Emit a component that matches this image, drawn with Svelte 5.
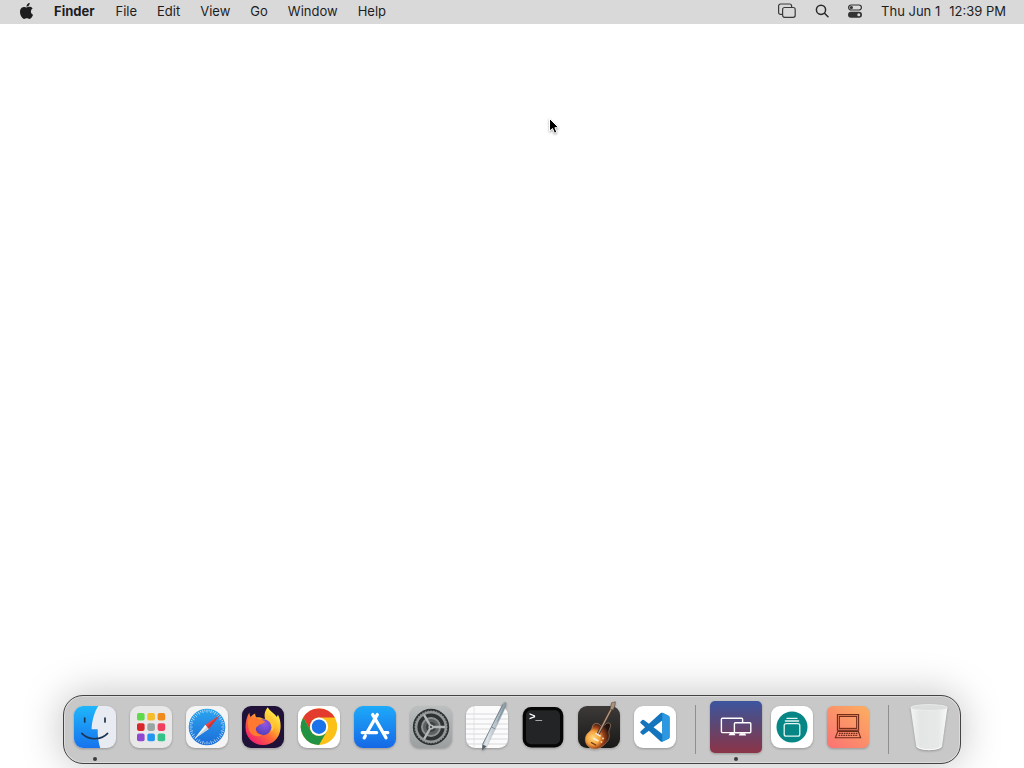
<script>
  const menus = ["File", "Edit", "View", "Go", "Window", "Help"];

  const padColors = [
    ["#5fd94b", "#f4bd2c", "#ef8a1f"],
    ["#d8262b", "#9aa5a3", "#f0405f"],
    ["#8f48cf", "#2196f3", "#33c288"],
  ];

  const ticks = Array.from({ length: 48 }, (_, i) => i * 7.5);
  const teeth = Array.from({ length: 36 }, (_, i) => i * 10);
  const paperLines = [13, 18, 23, 28, 33, 38, 43];
</script>

{#snippet finder()}
  <defs>
    <linearGradient id="finder-blue" x1="0" y1="0" x2="0" y2="1">
      <stop offset="0" stop-color="#1fb6fb" />
      <stop offset="1" stop-color="#1673ee" />
    </linearGradient>
    <clipPath id="finder-clip"><rect x="5" y="5" width="42" height="42" rx="9" /></clipPath>
  </defs>
  <g clip-path="url(#finder-clip)">
    <rect x="5" y="5" width="42" height="42" fill="#e9ebf2" />
    <path d="M5 5H29.3C25.5 11 23 19 22.6 28.3H28.7C28.6 35 29.4 42 31.2 47H5z" fill="url(#finder-blue)" />
  </g>
  <path d="M15.7 17v4M36 17v4" stroke="#1c3550" stroke-width="1.7" stroke-linecap="round" />
  <path d="M12.8 32.4C19.5 39.6 32 39.6 38.6 32.4" fill="none" stroke="#1c3550" stroke-width="1.6" stroke-linecap="round" />
{/snippet}

{#snippet launchpad()}
  <rect x="5" y="5" width="42" height="42" rx="9" fill="#e8e8e8" />
  {#each padColors as row, r}
    {#each row as color, c}
      <rect x={12 + c * 10.3} y={12 + r * 10.3} width="7.6" height="7.6" rx="1.8" fill={color} />
    {/each}
  {/each}
{/snippet}

{#snippet safari()}
  <defs>
    <linearGradient id="safari-dial" x1="0" y1="0" x2="0" y2="1">
      <stop offset="0" stop-color="#2ba5ef" />
      <stop offset="1" stop-color="#1b6cd8" />
    </linearGradient>
  </defs>
  <rect x="5" y="5" width="42" height="42" rx="9" fill="#f4f4f4" />
  <circle cx="26" cy="26" r="18.3" fill="url(#safari-dial)" />
  {#each ticks as angle, i}
    <path
      d={i % 2 ? "M26 8.6v1.8" : "M26 8.6v3"}
      transform="rotate({angle} 26 26)"
      stroke="#d8ecfb"
      stroke-width="0.7"
    />
  {/each}
  <path d="M38.6 14.2 24.3 23.8 27.7 28z" fill="#f0413e" />
  <path d="M13.4 37.8 24.3 23.8 27.7 28z" fill="#f3f5f7" />
  <path d="M38.6 14.2 27.7 28 26 26z" fill="#c93439" />
  <path d="M13.4 37.8 27.7 28 26 26z" fill="#cbd2da" />
{/snippet}

{#snippet firefox()}
  <defs>
    <linearGradient id="fx-flame" x1="0.85" y1="0.1" x2="0.2" y2="0.9">
      <stop offset="0" stop-color="#fff04d" />
      <stop offset="0.3" stop-color="#ffc02d" />
      <stop offset="0.6" stop-color="#ff6a36" />
      <stop offset="1" stop-color="#f2246c" />
    </linearGradient>
    <radialGradient id="fx-globe" cx="0.6" cy="0.3" r="0.8">
      <stop offset="0" stop-color="#9457e0" />
      <stop offset="1" stop-color="#4b3bb8" />
    </radialGradient>
  </defs>
  <rect x="5" y="5" width="42" height="42" rx="9" fill="#1f1138" />
  <path
    d="M30.6 6.2C32.8 10 37.5 12.4 39.9 16C40.5 14.8 40.7 14.4 40.8 13.6C43 17.4 44 22.5 43.5 27.4C42.6 37 35.6 44 26 44C16 44 8.6 36.5 8.5 26.8C8.4 21.5 9.6 15.6 12.4 11.4C12.3 13.2 12.8 15 13.6 16C14.8 14.4 16.2 13.2 18.2 12.4C18 14 18.6 15.6 19.4 16.3C21.4 16 23.6 16.4 25 17.2L28.2 18.2C26.6 14.2 28 9.6 30.6 6.2z"
    fill="url(#fx-flame)"
  />
  <circle cx="26.3" cy="26.2" r="8" fill="url(#fx-globe)" />
  <path
    d="M11.5 18C15 15.8 19.4 16.6 22.6 18.2C24.2 19 27.4 19.4 28 20.4C27.4 22.3 24 23 22.3 23.6C21 25.4 19.3 25.8 18.8 27.6C18.4 31.5 21.6 34 25.6 33.6C22.8 36.6 15 36 12.4 29.8C11 26.4 10.5 22 11.5 18z"
    fill="#ff7a30"
  />
  <path d="M27.6 17.6C34 19 37 25.6 33.6 31.2C39.6 26.6 38.4 17.6 31.6 14.4C31 16 29.6 17.2 27.6 17.6z" fill="#ffc63a" />
{/snippet}

{#snippet chrome()}
  <rect x="5" y="5" width="42" height="42" rx="9" fill="#fff" />
  <circle cx="26" cy="25.7" r="18.2" fill="#fbc116" />
  <path d="M10.2 16.6A18.2 18.2 0 0 1 41.8 16.6H26A9.1 9.1 0 0 0 18.1 30.2z" fill="#e33b2e" />
  <path d="M10.2 16.6A18.2 18.2 0 0 0 26 43.9L33.9 30.2A9.1 9.1 0 0 1 18.1 30.2z" fill="#229342" />
  <circle cx="26" cy="25.7" r="9.1" fill="#fff" />
  <circle cx="26" cy="25.7" r="7.2" fill="#1a73e8" />
{/snippet}

{#snippet appStore()}
  <defs>
    <linearGradient id="store-blue" x1="0" y1="0" x2="0" y2="1">
      <stop offset="0" stop-color="#1daafa" />
      <stop offset="1" stop-color="#1668e6" />
    </linearGradient>
  </defs>
  <rect x="5" y="5" width="42" height="42" rx="9" fill="url(#store-blue)" />
  <g fill="none" stroke="#fff" stroke-width="3.3" stroke-linecap="round">
    <path d="M28.3 13.6 18.3 31M23.7 13.6 37 36.8M13.2 31.6H27.6M34 31.6H38.8M16.3 35 15.2 36.8" />
  </g>
{/snippet}

{#snippet settings()}
  <defs>
    <linearGradient id="prefs-plate" x1="0" y1="0" x2="0" y2="1">
      <stop offset="0" stop-color="#bcbfbf" />
      <stop offset="1" stop-color="#9c9f9f" />
    </linearGradient>
  </defs>
  <rect x="5" y="5" width="42" height="42" rx="9" fill="url(#prefs-plate)" />
  <circle cx="26" cy="26" r="18.2" fill="#2f3232" />
  <circle cx="26" cy="26" r="14.8" fill="none" stroke="#949898" stroke-width="2.4" />
  {#each teeth as angle}
    <path d="M26 9.4v2" transform="rotate({angle} 26 26)" stroke="#949898" stroke-width="1.2" />
  {/each}
  <circle cx="26" cy="26" r="9.6" fill="#5d6161" />
  <circle cx="26" cy="26" r="9" fill="none" stroke="#8d9191" stroke-width="2" />
  <circle cx="26" cy="26" r="5" fill="#3c3f3f" />
  <path d="M26 26H40M26 26 19 13.9M26 26 19 38.1" stroke="#b4b8b8" stroke-width="2.3" />
  <circle cx="26" cy="26" r="2.6" fill="#b4b8b8" />
  <circle cx="26" cy="26" r="1.1" fill="#3c3f3f" />
{/snippet}

{#snippet textEdit()}
  <defs>
    <linearGradient id="pen-metal" x1="0" y1="0" x2="1" y2="0.4">
      <stop offset="0" stop-color="#68747d" />
      <stop offset="0.45" stop-color="#dfe7ec" />
      <stop offset="1" stop-color="#66757f" />
    </linearGradient>
  </defs>
  <rect x="5" y="5" width="42" height="42" rx="9" fill="#fbfbfb" />
  {#each paperLines as y}
    <path d="M5 {y}H47" stroke="#c9ccd0" stroke-width="0.7" />
  {/each}
  <path d="M13 5V47" stroke="#e0dcdc" stroke-width="0.7" />
  <path d="M44.6 7 25.5 47.4 21.6 50 23 46z" fill="#000" opacity="0.15" />
  <path d="M42.3 1.8Q44.2 0 45.5 2.5L44.8 6 26.2 44.5 21 49.6 21.4 42.8z" fill="url(#pen-metal)" />
  <path d="M21.4 43.5 25.5 45.2 21 49.6z" fill="#555e64" />
  <path d="M41.8 3.5 21.6 43.5" stroke="#5f6d77" stroke-width="0.8" />
  <path d="M43.8 5.5 36.5 20.5" stroke="#7a99aa" stroke-width="1" />
  <path d="M30.4 26 34.3 28" stroke="#717d86" stroke-width="0.8" />
{/snippet}

{#snippet terminal()}
  <rect x="5.7" y="6" width="40.6" height="40.6" rx="8.5" fill="#060606" />
  <rect x="9" y="9.3" width="34" height="34" rx="5" fill="#222425" />
  <text x="12" y="19" class="prompt">&gt;_</text>
{/snippet}

{#snippet garageBand()}
  <defs>
    <linearGradient id="gb-amp" x1="0" y1="0" x2="0" y2="1">
      <stop offset="0" stop-color="#3d3a39" />
      <stop offset="1" stop-color="#191918" />
    </linearGradient>
    <radialGradient id="gb-burst" gradientUnits="userSpaceOnUse" cx="20" cy="37" r="17">
      <stop offset="0" stop-color="#ffdc7c" />
      <stop offset="0.4" stop-color="#f59f3c" />
      <stop offset="0.65" stop-color="#9c4018" />
      <stop offset="1" stop-color="#1f1210" />
    </radialGradient>
  </defs>
  <rect x="5" y="5" width="42" height="42" rx="9" fill="url(#gb-amp)" />
  <path
    d="M20 24C22 21.5 26 22 28 25L32 24C33 21.5 37.2 21 37.6 24C37.6 27 35.6 29 35.8 31.5C37 35.5 36 39.5 32.4 42.4C29 46.4 24 49 19 47.6C13 45.6 10.8 39 13.4 34C15.2 31 18.4 29.8 18.8 27.5z"
    fill="url(#gb-burst)"
    stroke="#c9a37c"
    stroke-width="0.5"
  />
  <path d="M24.6 34 38.6 7" stroke="#4a3227" stroke-width="3" />
  <path d="M24.6 34 38.8 7" stroke="#b59b88" stroke-width="1.4" />
  <path d="M37 8 38.6 1.8 42.4 0.8 42 4 40.2 9z" fill="#a8917f" stroke="#4c3a30" stroke-width="0.5" />
  <path d="M22.6 32.4 27.6 35.2M20.2 37.2 25.4 40" stroke="#f7eddb" stroke-width="1.6" />
  <path d="M18 41.4 23.2 44.2" stroke="#6d3a1c" stroke-width="1.2" />
  <circle cx="30" cy="37.6" r="1" fill="#f3d9a2" />
  <circle cx="28.4" cy="41" r="0.9" fill="#f3d9a2" />
{/snippet}

{#snippet vscode()}
  <rect x="5" y="5" width="42" height="42" rx="9" fill="#fff" />
  <g transform="translate(11.3 11.6) scale(1.22)">
    <path
      d="M23.15 2.587L18.21.21a1.494 1.494 0 0 0-1.705.29l-9.46 8.63-4.12-3.128a.999.999 0 0 0-1.276.057L.327 7.261A1 1 0 0 0 .326 8.74L3.899 12 .326 15.26a1 1 0 0 0 .001 1.479L1.65 17.94a.999.999 0 0 0 1.276.057l4.12-3.128 9.46 8.63a1.492 1.492 0 0 0 1.704.29l4.942-2.377A1.5 1.5 0 0 0 24 20.06V3.939a1.5 1.5 0 0 0-.85-1.352zm-5.146 14.861L10.826 12l7.178-5.448v10.896z"
      fill="#1474bd"
    />
    <path d="M18.004.15 23.15 2.587A1.5 1.5 0 0 1 24 3.94V20.06A1.5 1.5 0 0 1 23.15 21.41L18.004 23.85z" fill="#2c98e2" />
  </g>
{/snippet}

{#snippet screens()}
  <defs>
    <linearGradient id="screens-bg" x1="0" y1="0" x2="0" y2="1">
      <stop offset="0" stop-color="#3c559f" />
      <stop offset="0.5" stop-color="#60456f" />
      <stop offset="1" stop-color="#8c3448" />
    </linearGradient>
  </defs>
  <rect width="52" height="52" rx="5" fill="url(#screens-bg)" />
  <g fill="none" stroke="#fff" stroke-width="1.4">
    <path d="M24.4 31.6H12.4A1 1 0 0 1 11.4 30.6V18.2A1 1 0 0 1 12.4 17.2H31.6A1 1 0 0 1 32.6 18.2V21.8" />
    <rect x="24.4" y="21.8" width="16.4" height="10" rx="1" />
  </g>
  <path d="M20 32H24.4L25.5 34.3H18.5zM30 32.3H35L36.2 34.5H28.8z" fill="#fff" />
{/snippet}

{#snippet stack()}
  <rect x="5" y="5" width="42" height="42" rx="9" fill="#fff" />
  <circle cx="26" cy="26" r="15.5" fill="#068785" />
  <g fill="none" stroke="#e4f5f3" stroke-width="1.3" stroke-linecap="round">
    <rect x="18.2" y="22.6" width="15.6" height="12.6" rx="2" />
    <path d="M19.4 20H32.6M21 17.4H31" />
  </g>
{/snippet}

{#snippet laptop()}
  <defs>
    <linearGradient id="laptop-bg" x1="0.9" y1="0" x2="0.1" y2="1">
      <stop offset="0" stop-color="#fbac61" />
      <stop offset="1" stop-color="#fb7473" />
    </linearGradient>
  </defs>
  <rect x="5" y="5" width="42" height="42" rx="6" fill="url(#laptop-bg)" />
  <g fill="none" stroke="#6e2918" stroke-width="1.1">
    <rect x="15.4" y="13.6" width="21.2" height="15.6" />
    <rect x="17.3" y="15.4" width="17.4" height="12" />
    <path d="M15.8 30.4H36.3L38.6 36.8H13.4z" />
    <path d="M17 32.4H35.4M16.5 34.4H36" stroke-dasharray="1.6 0.8" />
  </g>
{/snippet}

{#snippet trash()}
  <defs>
    <linearGradient id="bin-body" x1="0" y1="0" x2="1" y2="0">
      <stop offset="0" stop-color="#f3f4f4" />
      <stop offset="0.25" stop-color="#e4e6e6" />
      <stop offset="0.75" stop-color="#e7e9e9" />
      <stop offset="1" stop-color="#f8f9f9" />
    </linearGradient>
  </defs>
  <path d="M7.6 6.6 13.2 45.6C15 50.4 37.2 50.4 39 45.6L44.4 6.6z" fill="url(#bin-body)" />
  <ellipse cx="26" cy="6.6" rx="18.4" ry="3" fill="#dcdede" stroke="#ececec" stroke-width="0.9" />
  <path d="M14.2 45.6C18 49.6 34 49.6 38 45.6" fill="none" stroke="#fafafa" stroke-width="1" />
{/snippet}

{#snippet dockItem(label, art, running = false)}
  <li>
    <button class="app" aria-label={label}>
      <svg class="art" viewBox="0 0 52 52" aria-hidden="true">{@render art()}</svg>
      <span class="dot" class:running></span>
    </button>
  </li>
{/snippet}

<div class="desktop">
  <header class="menubar">
    <nav class="menus">
      <button class="menu apple" aria-label="Apple menu">
        <svg width="15" height="16" viewBox="1 0 22 24" fill="#1d1d1f" aria-hidden="true">
          <path
            d="M12.152 6.896c-.948 0-2.415-1.078-3.96-1.04-2.04.027-3.91 1.183-4.961 3.014-2.117 3.675-.546 9.103 1.519 12.09 1.013 1.454 2.208 3.09 3.792 3.039 1.52-.065 2.09-.987 3.935-.987 1.831 0 2.35.987 3.96.948 1.637-.026 2.676-1.48 3.676-2.948 1.156-1.688 1.636-3.325 1.662-3.415-.039-.013-3.182-1.221-3.22-4.857-.026-3.04 2.48-4.494 2.597-4.559-1.429-2.09-3.623-2.324-4.39-2.376-2-.156-3.675 1.09-4.61 1.09zM15.53 3.83c.843-1.012 1.4-2.427 1.245-3.83-1.207.052-2.662.805-3.532 1.818-.78.896-1.454 2.338-1.273 3.714 1.338.104 2.715-.688 3.559-1.701"
          />
        </svg>
      </button>
      <button class="menu current">Finder</button>
      {#each menus as menu}
        <button class="menu">{menu}</button>
      {/each}
    </nav>
    <div class="status">
      <button class="menu" aria-label="Windows">
        <svg width="18" height="16" viewBox="0 0 18 16" fill="none" stroke="#3a3a3a" stroke-width="1.2" aria-hidden="true">
          <path d="M4.6 11.4H2.6A2 2 0 0 1 .6 9.4V3A2 2 0 0 1 2.6 1H11.6A2 2 0 0 1 13.6 3V4.5" />
          <rect x="4.6" y="4.5" width="12.6" height="9.8" rx="2" />
        </svg>
      </button>
      <button class="menu" aria-label="Search">
        <svg width="14" height="16" viewBox="0 0 14 16" fill="none" stroke="#2a2a2a" stroke-width="1.5" stroke-linecap="round" aria-hidden="true">
          <circle cx="6" cy="6.8" r="4.6" />
          <path d="M9.5 10.3 13 13.8" />
        </svg>
      </button>
      <button class="menu" aria-label="Control Center">
        <svg width="14" height="16" viewBox="0 0 14 16" aria-hidden="true">
          <rect x="0.6" y="2" width="12.8" height="5" rx="2.5" fill="none" stroke="#333" stroke-width="1.2" />
          <circle cx="3.4" cy="4.5" r="1.6" fill="#333" />
          <rect x="0" y="8.8" width="14" height="6" rx="3" fill="#333" />
          <circle cx="10.8" cy="11.8" r="1.5" fill="#d9d9d9" />
        </svg>
      </button>
      <button class="menu clock"><span>Thu Jun 1</span><span>12:39 PM</span></button>
    </div>
  </header>

  <svg class="cursor" width="12" height="18" viewBox="0 0 12 18" aria-hidden="true">
    <path d="M1.5 1.5V14.2L4.5 11.5 6.5 16.2 8.8 15.2 6.9 10.7H10.7z" fill="#000" stroke="#fff" stroke-width="1" />
  </svg>

  <ul class="dock">
    {@render dockItem("Finder", finder, true)}
    {@render dockItem("Launchpad", launchpad)}
    {@render dockItem("Safari", safari)}
    {@render dockItem("Firefox", firefox)}
    {@render dockItem("Chrome", chrome)}
    {@render dockItem("App Store", appStore)}
    {@render dockItem("System Settings", settings)}
    {@render dockItem("TextEdit", textEdit)}
    {@render dockItem("Terminal", terminal)}
    {@render dockItem("GarageBand", garageBand)}
    {@render dockItem("Visual Studio Code", vscode)}
    <li class="divider"></li>
    {@render dockItem("Screens", screens, true)}
    {@render dockItem("Stack", stack)}
    {@render dockItem("Laptop", laptop)}
    <li class="divider"></li>
    {@render dockItem("Trash", trash)}
  </ul>
</div>

<style>
  :global(body) {
    margin: 0;
    background: #fff;
  }

  .desktop {
    position: relative;
    display: flex;
    flex-direction: column;
    justify-content: space-between;
    align-items: center;
    min-height: 100vh;
    overflow: hidden;
    font-family: Inter, "Liberation Sans", sans-serif;
  }

  .menubar {
    display: flex;
    justify-content: space-between;
    align-items: center;
    align-self: stretch;
    padding: 1px 18px 3px 19px;
    background: #d9d9d9;
  }

  .menus,
  .status {
    display: flex;
    align-items: center;
    gap: 20px;
  }

  .status {
    gap: 19px;
  }

  .menu {
    display: flex;
    padding: 0;
    border: none;
    background: none;
    color: #1d1d1f;
    font: 400 13px/20px Inter, "Liberation Sans", sans-serif;
    white-space: nowrap;
  }

  .current {
    margin-right: 1px;
    font-weight: 700;
  }

  .clock {
    gap: 9px;
  }

  .cursor {
    position: absolute;
    left: 548px;
    top: 117px;
    filter: drop-shadow(0 1px 1px rgb(0 0 0 / 35%));
  }

  .dock {
    display: flex;
    margin: 0 0 4px;
    padding: 0 3px;
    list-style: none;
    background: #c8c8c8;
    border: 1px solid #444;
    border-radius: 20px;
    box-shadow:
      inset 0 0 0 1px #dcdcdc,
      0 0 40px rgb(0 0 0 / 25%);
  }

  .app {
    display: flex;
    flex-direction: column;
    align-items: center;
    gap: 4px;
    width: 56px;
    padding: 5px 0 2px;
    border: none;
    background: none;
  }

  .art {
    width: 52px;
    height: 52px;
    overflow: visible;
    filter: drop-shadow(0 1px 1px rgb(0 0 0 / 25%));
  }

  .prompt {
    fill: #fff;
    font: 700 11px "Liberation Mono", monospace;
  }

  .dot {
    width: 4px;
    height: 4px;
    border-radius: 50%;
  }

  .running {
    background: #3c3c3c;
  }

  .divider {
    width: 1px;
    margin: 9px 12px;
    background: #8f8f8f;
  }
</style>
